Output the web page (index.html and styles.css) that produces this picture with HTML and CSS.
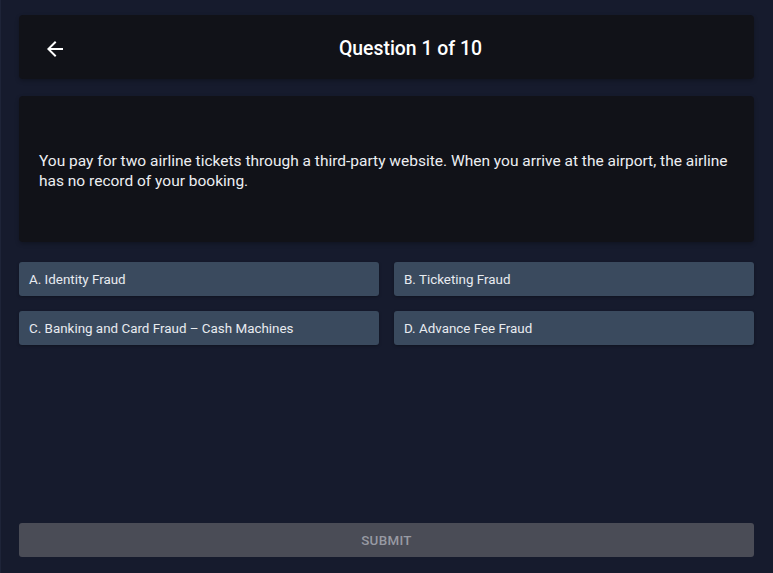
FILE: index.html
```html
<!DOCTYPE html>
<html lang="en">
<head>
    <meta charset="UTF-8">
    <meta name="viewport" content="width=device-width, initial-scale=1.0">
    <title>Quiz</title>
    <link rel="stylesheet" href="styles.css">
</head>
<body>
    <div class="quiz">
        <header class="quiz-header">
            <button class="back-button" aria-label="Back">
                <svg width="24" height="24" viewBox="0 0 24 24"><path d="M20 11H7.83l5.59-5.59L12 4l-8 8 8 8 1.41-1.41L7.83 13H20v-2z" fill="#fff"/></svg>
            </button>
            <h1 class="quiz-title">Question 1 of 10</h1>
        </header>

        <div class="question-card">
            <p>You pay for two airline tickets through a third-party website. When you arrive at the airport, the airline has no record of your booking.</p>
        </div>

        <div class="options">
            <button class="option">A. Identity Fraud</button>
            <button class="option">B. Ticketing Fraud</button>
            <button class="option">C. Banking and Card Fraud – Cash Machines</button>
            <button class="option">D. Advance Fee Fraud</button>
        </div>

        <button class="submit-button" disabled>SUBMIT</button>
    </div>
</body>
</html>
```

FILE: styles.css
```css
html, body {
    height: 100%;
}
body {
    font-family: Roboto, 'Liberation Sans', sans-serif;
    margin: 0;
    padding: 0;
    background-color: #161b2d;
    color: #fff;
}
.quiz {
    box-sizing: border-box;
    height: 100%;
    display: flex;
    flex-direction: column;
    padding: 15px 19px 16px 18px;
    border-left: 1px solid #1e2438;
}
.quiz-header {
    display: flex;
    align-items: center;
    height: 64px;
    padding: 0 12px;
    background-color: #111218;
    border-radius: 4px;
    box-shadow: 0 2px 4px rgba(0, 0, 0, 0.25);
}
.back-button {
    width: 48px;
    height: 48px;
    margin-top: 3px;
    display: flex;
    align-items: center;
    justify-content: center;
    background: none;
    border: none;
    padding: 0;
    cursor: pointer;
}
.quiz-title {
    flex: 1;
    margin: 3px 0 0;
    text-align: center;
    font-size: 19.4px;
    font-weight: 500;
}
.question-card {
    margin-top: 17px;
    height: 146px;
    box-sizing: border-box;
    display: flex;
    align-items: center;
    padding: 3px 20px 0;
    background-color: #111218;
    border-radius: 4px;
    box-shadow: 0 2px 4px rgba(0, 0, 0, 0.25);
}
.question-card p {
    margin: 0;
    font-size: 15.5px;
    line-height: 20px;
    color: #eceef2;
}
.options {
    margin-top: 20px;
    display: grid;
    grid-template-columns: 1fr 1fr;
    column-gap: 15px;
    row-gap: 15px;
}
.option {
    height: 34px;
    padding: 0 10px;
    text-align: left;
    font-family: inherit;
    font-size: 13.4px;
    color: #e8ebf0;
    background-color: #3a4a5e;
    border: none;
    border-radius: 3px;
    box-shadow: 0 1px 3px rgba(0, 0, 0, 0.3);
    cursor: pointer;
}
.option:hover {
    background-color: #44566c;
}
.submit-button {
    margin-top: auto;
    height: 34px;
    font-family: inherit;
    font-size: 13.4px;
    font-weight: 500;
    letter-spacing: 0.3px;
    color: #989aa3;
    background-color: #4a4c56;
    border: none;
    border-radius: 3px;
}
```
